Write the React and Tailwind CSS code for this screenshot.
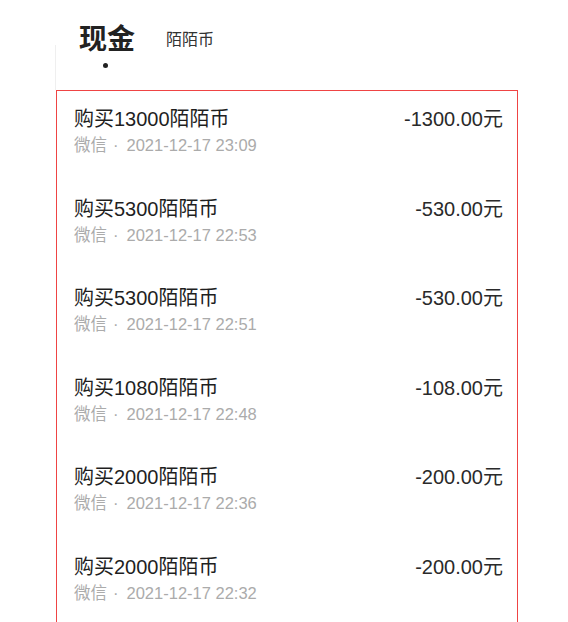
import React from 'react';

const records = [
  { title: '购买13000陌陌币', amount: '-1300.00元', time: '2021-12-17 23:09' },
  { title: '购买5300陌陌币', amount: '-530.00元', time: '2021-12-17 22:53' },
  { title: '购买5300陌陌币', amount: '-530.00元', time: '2021-12-17 22:51' },
  { title: '购买1080陌陌币', amount: '-108.00元', time: '2021-12-17 22:48' },
  { title: '购买2000陌陌币', amount: '-200.00元', time: '2021-12-17 22:36' },
  { title: '购买2000陌陌币', amount: '-200.00元', time: '2021-12-17 22:32' },
];

const font = { fontFamily: '"Liberation Sans", "Noto Sans CJK SC", sans-serif' };

const App = () => {
  return (
    <div className="w-[568px] h-[622px] overflow-hidden bg-white" style={font}>
      {/* Tabs */}
      <div className="ml-[55px]">
        <div className="h-[45px] flex items-start pt-[25px] pl-[24px]">
          <span className="text-[28px] leading-[30px] font-bold text-[#222]">现金</span>
          <span className="ml-[31px] mt-[4px] text-[16px] leading-[22px] text-[#333]">陌陌币</span>
        </div>
        <div className="h-[45px] border-l border-[#efefef] pl-[47px] pt-[18px]">
          <div className="w-[5px] h-[5px] rounded-full bg-[#222]" />
        </div>
      </div>

      {/* Records */}
      <div className="ml-[56px] w-[462px] border-[1.5px] border-[#ef4444]">
        {records.map((r, i) => (
          <div key={i} className="h-[89.6px] pt-[15px] pl-[17px] pr-[14px]">
            <div className="flex items-center justify-between">
              <span className="text-[20px] leading-[26px] text-[#1f1f1f]">{r.title}</span>
              <span className="text-[20px] leading-[26px] text-[#2a2a2a]">{r.amount}</span>
            </div>
            <div className="mt-[2px] text-[16.5px] leading-[22px] text-[#ababab]">
              微信<span className="ml-[6px] mr-[8px]">·</span>{r.time}
            </div>
          </div>
        ))}
      </div>
    </div>
  );
};

export default App;
